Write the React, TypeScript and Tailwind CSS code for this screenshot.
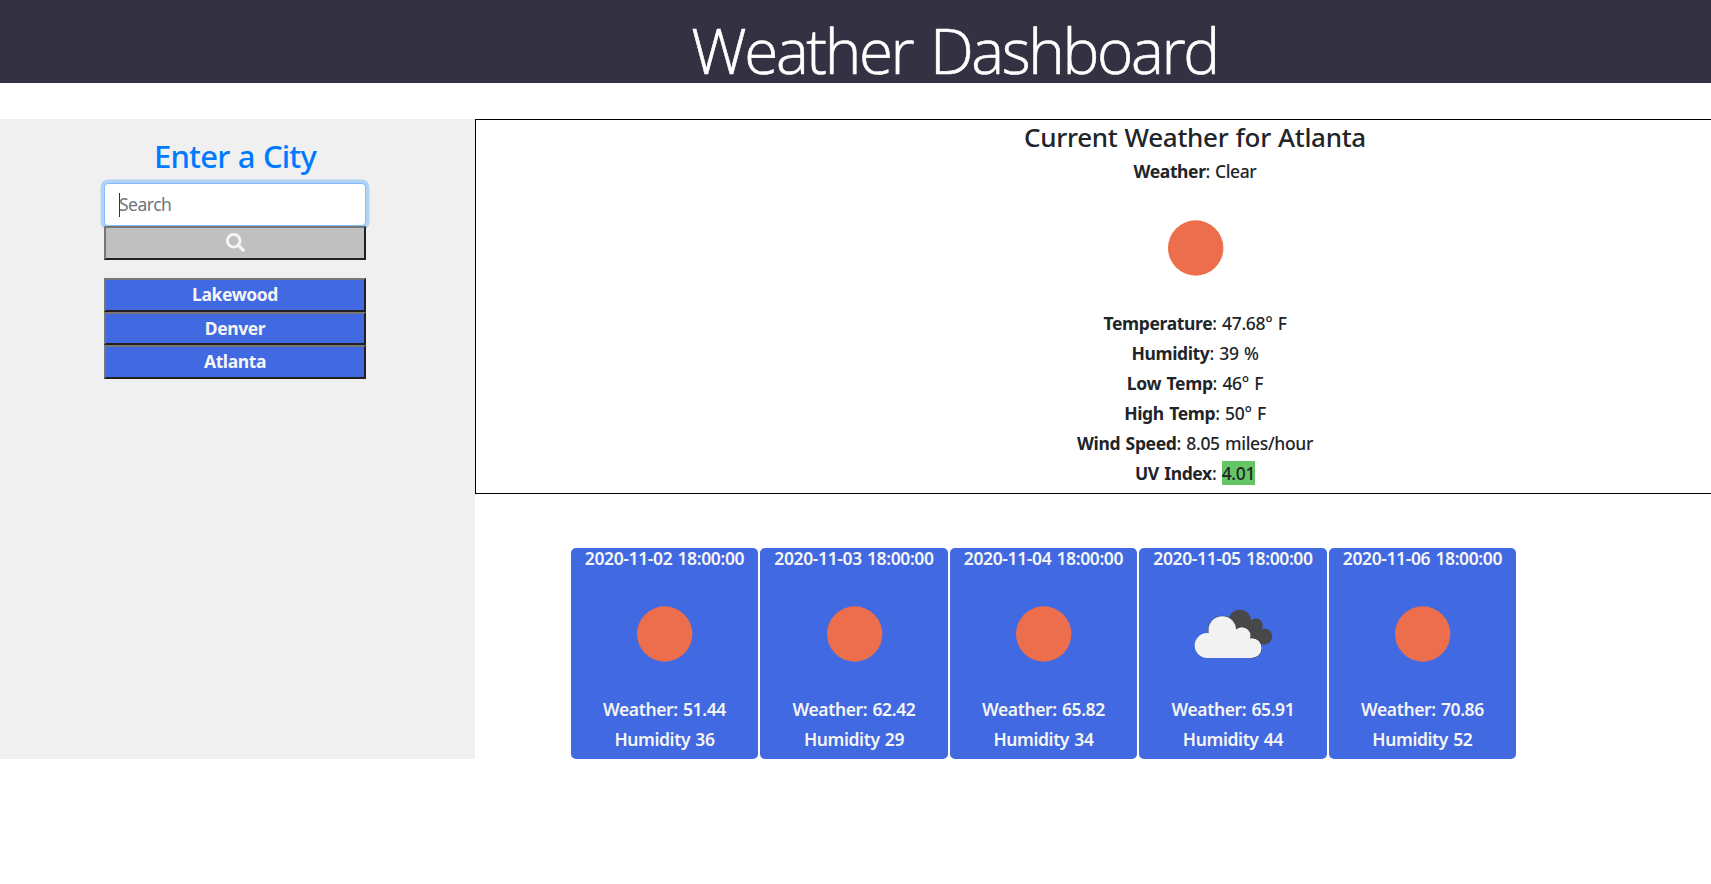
import { FaSearch } from "react-icons/fa";

const cities = ["Lakewood", "Denver", "Atlanta"];

const details = [
  { label: "Temperature", value: "47.68° F" },
  { label: "Humidity", value: "39 %" },
  { label: "Low Temp", value: "46° F" },
  { label: "High Temp", value: "50° F" },
  { label: "Wind Speed", value: "8.05 miles/hour" },
];

const forecast = [
  { date: "2020-11-02 18:00:00", icon: "sun", temp: "51.44", humidity: 36 },
  { date: "2020-11-03 18:00:00", icon: "sun", temp: "62.42", humidity: 29 },
  { date: "2020-11-04 18:00:00", icon: "sun", temp: "65.82", humidity: 34 },
  { date: "2020-11-05 18:00:00", icon: "clouds", temp: "65.91", humidity: 44 },
  { date: "2020-11-06 18:00:00", icon: "sun", temp: "70.86", humidity: 52 },
];

function Sun() {
  return (
    <svg className="block size-[100px]" viewBox="0 0 100 100">
      <circle cx="50.7" cy="50" r="27.7" fill="#ec6e4c" />
    </svg>
  );
}

function Clouds() {
  return (
    <svg className="block size-[100px]" viewBox="8.7 0 100 100">
      <g fill="#48484a">
        <circle cx="65.5" cy="37" r="11.3" />
        <circle cx="81.5" cy="41.5" r="7" />
        <circle cx="90" cy="52.5" r="8" />
        <path d="M60 40H84L90 60H78Z" />
      </g>
      <g fill="#f2f2f2" stroke="#333335" strokeWidth="1">
        <circle cx="67.5" cy="52" r="8.7" />
        <circle cx="77.5" cy="64" r="9.8" />
        <circle cx="48" cy="46" r="13.8" />
      </g>
      <g fill="#f2f2f2">
        <circle cx="67.5" cy="52" r="8.7" />
        <circle cx="77.5" cy="64" r="9.8" />
        <circle cx="48" cy="46" r="13.8" />
        <circle cx="32.8" cy="61.5" r="12.4" />
        <path d="M34.5 49H60L78 60V73.9H32.8Z" />
      </g>
    </svg>
  );
}

export default function App() {
  return (
    <div className="h-[884px] w-full overflow-hidden bg-white font-['Noto_Sans','Open_Sans',sans-serif] text-[#212529]">
      <header className="flex h-[83px] justify-center bg-[#333142] pl-[198px] pt-[12px]">
        <h1 className="whitespace-nowrap font-['Open_Sans','Noto_Sans',sans-serif] text-[62px] font-light leading-[77px] tracking-[-2.4px] text-white [-webkit-text-stroke:0.6px_white] [word-spacing:4px]">
          Weather Dashboard
        </h1>
      </header>

      <main className="mt-9 flex items-start">
        <aside className="flex h-[640px] w-[475px] shrink-0 flex-col bg-[#f0f0f0] pl-[104px] pr-[109px] pt-[18px]">
          <h2 className="mb-[7px] whitespace-nowrap text-center text-[31px] font-medium leading-[39px] tracking-[-0.8px] text-[#007bff] [word-spacing:1px]">
            Enter a City
          </h2>
          <div className="flex h-[43px] items-center rounded border border-[#80bdff] bg-white pl-[14px] text-[17.5px] text-[#6c757d] shadow-[0_0_0_3.5px_#b3d3f5]">
            <span className="-mr-px h-6 w-px bg-[#333]" />
            <span className="tracking-[-0.5px]">Search</span>
          </div>
          <button className="relative flex h-[34px] w-full items-center justify-center border-2 border-b-[#212121] border-l-[#767676] border-r-[#212121] border-t-[#767676] bg-[#c0c0c0] text-[#f5f5f5]">
            <FaSearch className="mb-0.5 size-[19px]" />
          </button>
          <div className="mt-[18px] flex flex-col">
            {cities.map((city) => (
              <button
                key={city}
                className="flex h-[33.6px] items-center justify-center border-2 border-b-[#212121] border-l-[#767676] border-r-[#212121] border-t-[#767676] bg-[#4169e1] pb-[1.2px] text-[17.5px] font-bold tracking-[-0.4px] text-[#f5f5f5]"
              >
                {city}
              </button>
            ))}
          </div>
        </aside>

        <div className="flex w-[1440px] shrink-0 flex-col">
          <section className="flex h-[375px] flex-col items-center border border-black pt-px">
            <h3 className="whitespace-nowrap text-[26px] font-medium leading-[32px] tracking-[-0.3px] [word-spacing:0.7px]">
              Current Weather for Atlanta
            </h3>
            <p className="mt-[3px] text-[17.5px] font-medium leading-[30px] tracking-[-0.4px] [word-spacing:1px]">
              <b>Weather</b>: Clear
            </p>
            <div className="mt-[12px]">
              <Sun />
            </div>
            <div className="mt-[10px] text-center text-[17.5px] font-medium leading-[30px] tracking-[-0.35px] [word-spacing:1.2px]">
              {details.map((d) => (
                <p key={d.label}>
                  <b>{d.label}</b>: {d.value}
                </p>
              ))}
              <p>
                <b>UV Index</b>: <span className="bg-[#66c665]">4.01</span>
              </p>
            </div>
          </section>

          <section className="ml-[95.8px] mt-[54px] flex gap-[2.1px]">
            {forecast.map((day) => (
              <article
                key={day.date}
                className="flex h-[211px] w-[187.4px] flex-col items-center rounded-[5px] bg-[#4169e1] text-[17.5px] font-semibold tracking-[-0.38px] text-[#f5f5f5] [word-spacing:1px]"
              >
                <p className="whitespace-nowrap leading-[20px]">{day.date}</p>
                <div className="mt-[16px]">{day.icon === "sun" ? <Sun /> : <Clouds />}</div>
                <p className="mt-[10px] leading-[30px]">Weather: {day.temp}</p>
                <p className="leading-[30px]">Humidity {day.humidity}</p>
              </article>
            ))}
          </section>
        </div>
      </main>
    </div>
  );
}
